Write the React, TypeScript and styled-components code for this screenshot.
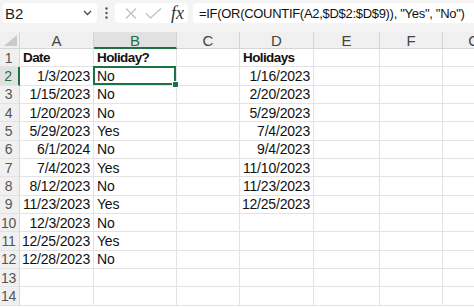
import React from "react";
import styled, { createGlobalStyle } from "styled-components";

const GREEN = "#1e7145";
const GRID = "#e3e3e3";

const Global = createGlobalStyle`
  html, body { margin: 0; padding: 0; background: #ffffff; }
  body { font-family: "Liberation Sans", Arial, sans-serif; overflow: hidden; }
  * { box-sizing: border-box; }
`;

const Page = styled.div`
  width: 474px;
  height: 307px;
  overflow: hidden;
  background: #fff;
`;

const Toolbar = styled.div`
  display: flex;
  align-items: center;
  height: 32px;
  padding: 3px 0 9px 3px;
  background: #f4f4f4;
`;

const NameBox = styled.div`
  display: flex;
  align-items: center;
  justify-content: space-between;
  width: 94px;
  height: 20px;
  padding: 0 5px 0 2px;
  background: #fff;
  border-radius: 4px;
  font-size: 15px;
  color: #222;
`;

const Dots = styled.svg`
  margin: 0 7px 0 8px;
  flex: none;
`;

const FxGroup = styled.div`
  display: flex;
  align-items: center;
  width: 73px;
  height: 20px;
  padding-left: 10px;
  gap: 8px;
  background: #fff;
  border-radius: 4px;
`;

const FxText = styled.span`
  font-family: "Liberation Serif", "Times New Roman", serif;
  font-style: italic;
  font-size: 18px;
  color: #333;
  margin-left: 1px;
  line-height: 1;
`;

const FormulaInput = styled.div`
  flex: 1;
  height: 20px;
  margin-left: 5px;
  padding-left: 6px;
  display: flex;
  align-items: center;
  background: #fff;
  border-radius: 4px 0 0 4px;
  font-size: 13px;
  letter-spacing: -0.3px;
  color: #111;
  white-space: nowrap;
  overflow: hidden;
`;

const Sheet = styled.div`
  display: grid;
  width: 506px;
  grid-template-columns: 20px 74px 83px 63px 74px 66px 63px 63px;
  grid-template-rows: 17px;
  grid-auto-rows: 18.33px;
`;

const Corner = styled.div`
  position: relative;
  background: #f0f0f0;
  border-right: 1px solid #d6d6d6;
  border-bottom: 1px solid #d6d6d6;
`;

const CornerTri = styled.svg`
  position: absolute;
  right: 2px;
  bottom: 2px;
`;

const ColHead = styled.div<{ $sel?: boolean }>`
  display: flex;
  align-items: center;
  justify-content: center;
  background: ${(p) => (p.$sel ? "#e1e1e1" : "#f0f0f0")};
  color: ${(p) => (p.$sel ? GREEN : "#444")};
  border-right: 1px solid #d6d6d6;
  border-bottom: ${(p) => (p.$sel ? `2px solid ${GREEN}` : "1px solid #d6d6d6")};
  font-size: 15px;
  padding-top: ${(p) => (p.$sel ? "1px" : "0")};
`;

const RowHead = styled.div<{ $sel?: boolean }>`
  display: flex;
  align-items: center;
  justify-content: center;
  padding-right: 2px;
  background: ${(p) => (p.$sel ? "#e1e1e1" : "#f0f0f0")};
  color: ${(p) => (p.$sel ? GREEN : "#555")};
  border-right: ${(p) => (p.$sel ? `2px solid ${GREEN}` : "1px solid #d6d6d6")};
  border-bottom: 1px solid ${GRID};
  font-size: 14px;
  letter-spacing: -0.3px;
`;

const Cell = styled.div<{ $align?: "left" | "right"; $bold?: boolean; $sel?: boolean }>`
  position: relative;
  display: flex;
  align-items: center;
  justify-content: ${(p) => (p.$align === "right" ? "flex-end" : "flex-start")};
  padding: 0 3px;
  border-right: 1px solid ${GRID};
  border-bottom: 1px solid ${GRID};
  font-size: ${(p) => (p.$bold ? "13.5px" : "14px")};
  font-weight: ${(p) => (p.$bold ? 700 : 400)};
  letter-spacing: ${(p) => (p.$bold ? "-0.6px" : "-0.2px")};
  color: #111;
  white-space: nowrap;
  ${(p) =>
    p.$sel &&
    `
    &::after {
      content: "";
      position: absolute;
      left: -1px;
      top: -1px;
      right: 0;
      bottom: 0;
      border: 2px solid ${GREEN};
    }
    &::before {
      content: "";
      position: absolute;
      right: -3px;
      bottom: -3px;
      width: 5px;
      height: 5px;
      background: ${GREEN};
      border: 1px solid #fff;
      z-index: 2;
    }
  `}
`;

const columns = ["A", "B", "C", "D", "E", "F", "G"];

type Row = { a?: string; b?: string; d?: string; header?: boolean };

const rows: Row[] = [
  { a: "Date", b: "Holiday?", d: "Holidays", header: true },
  { a: "1/3/2023", b: "No", d: "1/16/2023" },
  { a: "1/15/2023", b: "No", d: "2/20/2023" },
  { a: "1/20/2023", b: "No", d: "5/29/2023" },
  { a: "5/29/2023", b: "Yes", d: "7/4/2023" },
  { a: "6/1/2024", b: "No", d: "9/4/2023" },
  { a: "7/4/2023", b: "Yes", d: "11/10/2023" },
  { a: "8/12/2023", b: "No", d: "11/23/2023" },
  { a: "11/23/2023", b: "Yes", d: "12/25/2023" },
  { a: "12/3/2023", b: "No" },
  { a: "12/25/2023", b: "Yes" },
  { a: "12/28/2023", b: "No" },
  {},
  {},
];

export default function App() {
  return (
    <Page>
      <Global />
      <Toolbar>
        <NameBox>
          <span>B2</span>
          <svg width="9" height="6" viewBox="0 0 9 6">
            <path d="M1 1l3.5 3.5L8 1" fill="none" stroke="#444" strokeWidth="1.3" />
          </svg>
        </NameBox>
        <Dots width="3" height="12" viewBox="0 0 3 12">
          <circle cx="1.5" cy="1.5" r="1.2" fill="#555" />
          <circle cx="1.5" cy="6" r="1.2" fill="#555" />
          <circle cx="1.5" cy="10.5" r="1.2" fill="#555" />
        </Dots>
        <FxGroup>
          <svg width="12" height="11" viewBox="0 0 12 11">
            <path d="M1 0.5l10 10M11 0.5l-10 10" stroke="#bdbdbd" strokeWidth="1.1" fill="none" />
          </svg>
          <svg width="17" height="11" viewBox="0 0 17 11">
            <path d="M1 5.5l4.5 4.5L16 0.5" stroke="#bdbdbd" strokeWidth="1.1" fill="none" />
          </svg>
          <FxText>fx</FxText>
        </FxGroup>
        <FormulaInput>=IF(OR(COUNTIF(A2,$D$2:$D$9)), "Yes", "No")</FormulaInput>
      </Toolbar>
      <Sheet>
        <Corner>
          <CornerTri width="13" height="11" viewBox="0 0 13 11">
            <path d="M13 0V11H0Z" fill="#c9c9c9" />
          </CornerTri>
        </Corner>
        {columns.map((c) => (
          <ColHead key={c} $sel={c === "B"}>
            {c}
          </ColHead>
        ))}
        {rows.map((r, i) => (
          <React.Fragment key={i}>
            <RowHead $sel={i === 1}>{i + 1}</RowHead>
            <Cell $align={r.header ? "left" : "right"} $bold={r.header}>
              {r.a}
            </Cell>
            <Cell $bold={r.header} $sel={i === 1}>
              {r.b}
            </Cell>
            <Cell />
            <Cell $align={r.header ? "left" : "right"} $bold={r.header}>
              {r.d}
            </Cell>
            <Cell />
            <Cell />
            <Cell />
          </React.Fragment>
        ))}
      </Sheet>
    </Page>
  );
}
